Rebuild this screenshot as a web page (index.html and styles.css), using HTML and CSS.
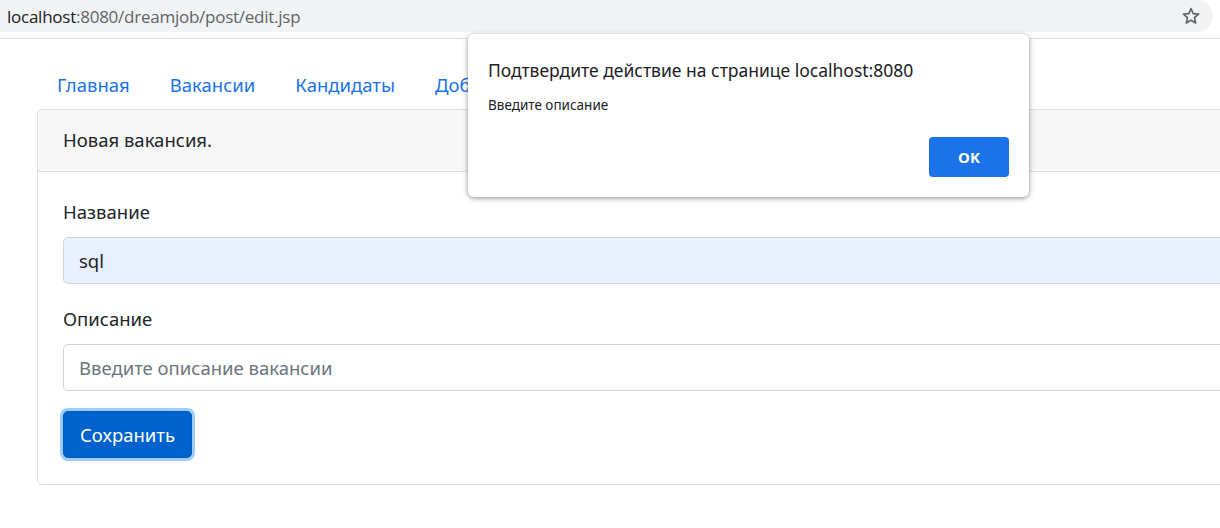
FILE: index.html
```html
<!DOCTYPE html>
<html lang="ru">
<head>
<meta charset="utf-8">
<title>edit.jsp</title>
<link rel="stylesheet" href="styles.css">
</head>
<body>
<header class="chrome">
  <div class="omnibox">
    <span class="url"><span class="host">localhost</span>:8080/dreamjob/post/edit.jsp</span>
    <svg class="star" width="20" height="20" viewBox="0 0 20 20" aria-hidden="true">
      <path d="M10 2.6 12.2 7.6 17.6 8.1 13.5 11.7 14.7 17 10 14.2 5.3 17 6.5 11.7 2.4 8.1 7.8 7.6Z" fill="none" stroke="#5f6368" stroke-width="1.6" stroke-linejoin="round"/>
    </svg>
  </div>
</header>
<main class="page">
  <nav class="nav">
    <a class="nav-link" href="#">Главная</a>
    <a class="nav-link" href="#">Вакансии</a>
    <a class="nav-link" href="#">Кандидаты</a>
    <a class="nav-link" href="#">Добавить вакансию</a>
  </nav>
  <section class="card">
    <div class="card-header">Новая вакансия.</div>
    <form class="card-body">
      <div class="form-group">
        <label class="label">Название</label>
        <div class="input autofill">sql</div>
      </div>
      <div class="form-group">
        <label class="label">Описание</label>
        <div class="input placeholder">Введите описание вакансии</div>
      </div>
      <button class="btn" type="button">Сохранить</button>
    </form>
  </section>
</main>
<div class="dialog">
  <div class="dialog-title">Подтвердите действие на странице localhost:8080</div>
  <div class="dialog-msg">Введите описание</div>
  <div class="dialog-actions"><button class="ok" type="button">OK</button></div>
</div>
</body>
</html>
```
FILE: styles.css
```css
html, body {
  margin: 0;
  padding: 0;
  background: #fff;
  overflow: hidden;
}
body {
  width: 1220px;
  height: 528px;
  font-family: "Noto Sans", "Open Sans", sans-serif;
  color: #212529;
}
.chrome {
  height: 38px;
  border-bottom: 1px solid #dadce0;
  box-sizing: content-box;
}
.omnibox {
  width: 1213px;
  height: 32px;
  background: #f1f3f4;
  border-radius: 0 16px 16px 0;
  display: flex;
  align-items: center;
  justify-content: space-between;
  padding: 0 12px 0 7px;
  box-sizing: border-box;
}
.url {
  font-family: "Open Sans", "Noto Sans", sans-serif;
  font-size: 17px;
  color: #5f6368;
  letter-spacing: -0.25px;
  white-space: nowrap;
}
.host { color: #202124; }
.star { display: block; }
.page {
  padding: 21px 0 0 37px;
  width: 1400px;
}
.nav {
  display: flex;
  height: 49px;
}
.nav-link {
  padding: 10px 20px;
  line-height: 30px;
  font-size: 18.5px;
  color: #1a73e8;
  text-decoration: none;
  white-space: nowrap;
}
.card {
  border: 1px solid #dfdfdf;
  border-radius: 5px;
  width: 1300px;
}
.card-header {
  padding: 15px 25px 16px;
  line-height: 30px;
  font-size: 18.5px;
  background: #f7f7f7;
  border-bottom: 1px solid #dfdfdf;
  border-radius: 5px 5px 0 0;
}
.card-body {
  padding: 25px 25px 26px;
  margin: 0;
}
.form-group { margin-bottom: 20px; }
.label {
  display: block;
  font-size: 18.5px;
  line-height: 30px;
  margin-bottom: 10px;
}
.input {
  height: 47px;
  box-sizing: border-box;
  border: 1px solid #ced4da;
  border-radius: 5px;
  padding: 8px 15px 7px;
  font-size: 18.5px;
  line-height: 30px;
}
.autofill { background: #e8f0fe; color: #212529; }
.placeholder { color: #6c757d; background: #fff; }
.btn {
  display: block;
  height: 47px;
  box-sizing: border-box;
  padding: 7px 16px;
  font-family: inherit;
  font-size: 18.5px;
  line-height: 30px;
  color: #fff;
  background: #0062cc;
  border: 1px solid #005cbf;
  border-radius: 5px;
  box-shadow: 0 0 0 3px rgba(38,143,255,.45);
}
.dialog {
  position: absolute;
  left: 468px;
  top: 34px;
  width: 561px;
  height: 163px;
  box-sizing: border-box;
  background: #fff;
  border-radius: 6px;
  box-shadow: 0 1px 4px rgba(0,0,0,.35), 0 2px 8px rgba(0,0,0,.12);
  padding: 24px 20px 20px 20px;
  font-family: "Noto Sans", "Open Sans", sans-serif;
  color: #202124;
}
.dialog-title {
  font-size: 17.5px;
  line-height: 24px;
}
.dialog-msg {
  font-size: 13.5px;
  line-height: 18px;
  margin-top: 14px;
}
.dialog-actions {
  display: flex;
  justify-content: flex-end;
  margin-top: 23px;
}
.ok {
  width: 80px;
  height: 40px;
  border: 0;
  border-radius: 4px;
  background: #1a73e8;
  color: #fff;
  font-family: inherit;
  font-weight: 700;
  font-size: 15px;
}
```
